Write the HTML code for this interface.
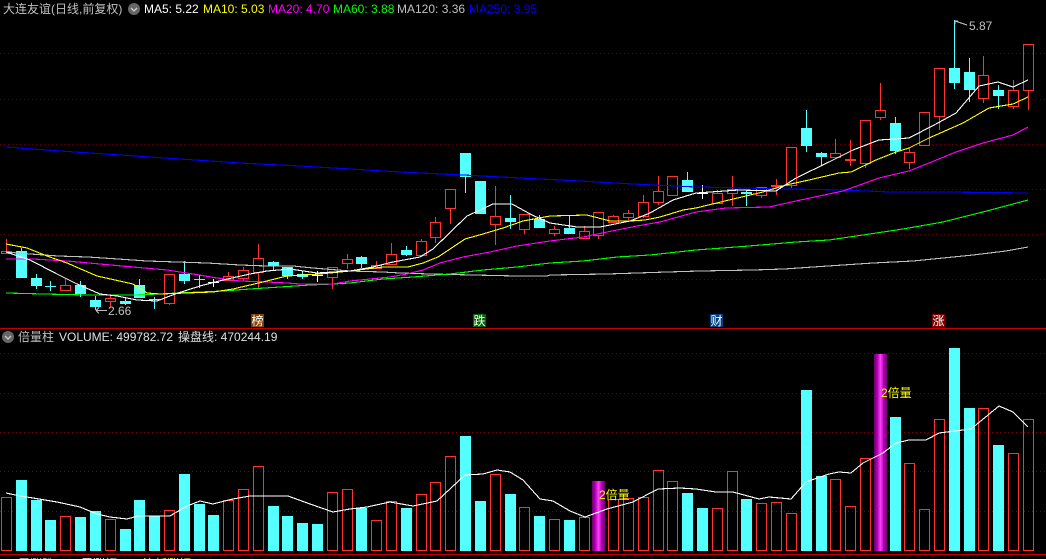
<!DOCTYPE html>
<html><head><meta charset="utf-8">
<style>
html,body{margin:0;padding:0;background:#000;width:1046px;height:559px;overflow:hidden}
#a{position:relative;width:1046px;height:559px;overflow:hidden;background:#000}
svg{position:absolute;left:0;top:0}
.t{position:absolute;white-space:nowrap;font:12px/14px "Liberation Sans","WenQuanYi Zen Hei","Noto Sans CJK SC",sans-serif}
.b{position:absolute;width:13px;height:13px;color:#fff;text-align:center;font:12px/13px "WenQuanYi Zen Hei","Noto Sans CJK SC",sans-serif;overflow:hidden}
</style></head><body><div id="a">
<svg width="1046" height="559" viewBox="0 0 1046 559" shape-rendering="crispEdges" fill="none">
<defs><linearGradient id="g" x1="0" x2="1" y1="0" y2="0"><stop offset="0" stop-color="#6a006a"/><stop offset=".25" stop-color="#b000b0"/><stop offset=".5" stop-color="#ff40ff"/><stop offset=".75" stop-color="#b000b0"/><stop offset="1" stop-color="#6a006a"/></linearGradient>
<pattern id="d1" width="4" height="1" patternUnits="userSpaceOnUse"><rect width="1" height="1" fill="#600000"/></pattern>
<pattern id="d2" width="4" height="1" patternUnits="userSpaceOnUse"><rect width="1" height="1" fill="#800000"/></pattern></defs>
<g fill="url(#d1)"><rect y="53" width="1046" height="1"/><rect y="99" width="1046" height="1"/><rect y="144" width="1046" height="1"/><rect y="189" width="1046" height="1"/><rect y="234" width="1046" height="1"/><rect y="279" width="1046" height="1"/></g>
<g fill="url(#d2)"><rect y="353" width="1046" height="1"/><rect y="393" width="1046" height="1"/><rect y="432" width="1046" height="1"/><rect y="471" width="1046" height="1"/><rect y="511" width="1046" height="1"/></g>
<path stroke="#c00000" d="M0 328.500H1046M0 554.500H1046"/>

<path fill="#54ffff" d="M16 251h11v27h-11zM21 248h1v3h-1zM31 278h11v8h-11zM36 274h1v15h-1zM45 286h11v1h-11zM50 281h1v10h-1zM75 285h11v9h-11zM80 281h1v16h-1zM90 300h11v7h-11zM95 296h1v14h-1zM120 301h11v3h-11zM125 297h1v8h-1zM134 285h11v13h-11zM139 279h1v6h-1zM149 299h11v1h-11zM154 297h1v12h-1zM179 274h11v7h-11zM184 261h1v23h-1zM194 279h11v1h-11zM199 275h1v13h-1zM268 262h11v4h-11zM273 261h1v9h-1zM282 267h11v9h-11zM287 276h1v3h-1zM297 274h11v3h-11zM302 271h1v8h-1zM356 257h11v7h-11zM361 256h1v12h-1zM401 250h11v5h-11zM406 246h1v10h-1zM460 153h11v24h-11zM465 177h1v16h-1zM475 181h11v33h-11zM505 218h11v4h-11zM510 195h1v34h-1zM534 219h11v9h-11zM539 215h1v4h-1zM564 228h11v6h-11zM569 215h1v13h-1zM682 180h11v12h-11zM687 172h1v8h-1zM741 192h11v2h-11zM746 190h1v16h-1zM801 128h11v18h-11zM806 110h1v42h-1zM816 153h11v4h-11zM821 152h1v13h-1zM890 123h11v28h-11zM895 117h1v37h-1zM949 68h11v15h-11zM954 20h1v69h-1zM964 72h11v18h-11zM969 58h1v44h-1zM993 90h11v6h-11zM998 85h1v24h-1z"/>
<path stroke="#ff3232" d="M1.500 251.500h10v2h-10zM6.500 239V251M60.500 285.500h10v5h-10zM65.500 279V285M105.500 298.500h10v3h-10zM110.500 296V298M110.500 302V307M164.500 274.500h10v29h-10zM169.500 304V305M223.500 276.500h10v4h-10zM228.500 272V276M238.500 270.500h10v8h-10zM243.500 267V270M243.500 279V281M253.500 258.500h10v14h-10zM258.500 244V258M258.500 273V288M327.500 267.500h10v10h-10zM332.500 278V289M342.500 259.500h10v4h-10zM347.500 254V259M347.500 264V269M371.500 265.500h10v3h-10zM376.500 261V265M386.500 254.500h10v10h-10zM391.500 243V254M416.500 241.500h10v14h-10zM421.500 239V241M430.500 222.500h10v15h-10zM435.500 217V222M435.500 238V243M445.500 189.500h10v19h-10zM450.500 209V224M490.500 216.500h10v8h-10zM495.500 186V216M495.500 225V245M519.500 214.500h10v15h-10zM524.500 230V234M549.500 229.500h10v4h-10zM554.500 226V229M554.500 234V236M579.500 231.500h10v7h-10zM584.500 226V231M593.500 212.500h10v23h-10zM598.500 236V239M608.500 216.500h10v6h-10zM613.500 215V216M623.500 213.500h10v4h-10zM628.500 210V213M628.500 218V220M638.500 202.500h10v14h-10zM643.500 195V202M643.500 217V218M653.500 191.500h10v11h-10zM658.500 176V191M658.500 203V205M667.500 176.500h10v19h-10zM712.500 193.500h10v10h-10zM717.500 190V193M727.500 189.500h10v4h-10zM732.500 176V189M732.500 194V206M756.500 187.500h10v8h-10zM761.500 196V198M771 185.500h11M771 186.500h11M776.500 179V195M786.500 147.500h10v38h-10zM791.500 186V188M830.500 153.500h10v4h-10zM835.500 139V153M845 159.500h11M845 160.500h11M850.500 140V166M860.500 120.500h10v43h-10zM865.500 164V168M875.500 110.500h10v7h-10zM880.500 83V110M880.500 118V120M904.500 152.500h10v10h-10zM909.500 148V152M909.500 163V169M919.500 112.500h10v33h-10zM934.500 68.500h10v48h-10zM939.500 117V130M978.500 75.500h10v23h-10zM983.500 56V75M983.500 99V103M1008.500 90.500h10v16h-10zM1013.500 80V90M1013.500 107V109M1023.500 44.500h10v46h-10zM1028.500 91V110"/>
<path stroke="#fff" d="M208 282.500h11M213.500 279V287M312 275.500h11M317.500 271V282M697 193.500h11M702.500 185V199"/>

<g stroke-width="1.100">
<polyline stroke="#0000ff" points="6,147 60,151 120,155 180,159 240,163 300,166 350,169 400,172 463,175 520,178 580,181 633,184 696,187 790,189 840,190 890,192 946,192 1028,193"/>
<polyline stroke="#c0c0c0" points="6,252 30,254 58,256 88,257 118,259 147,261 177,262 207,263 240,265 267,266 293,266 313,268 350,271 383,272 400,273 430,274 473,275 517,276 547,276 550,275 607,274 637,273 667,272 700,271 753,270 784,269 813,267 843,265 873,263 913,261 943,258 973,255 1006,251 1028,247"/>
<polyline stroke="#00ff00" points="6,293 43,294 87,295 133,295 160,294 177,293 223,291 250,289 280,287 310,285 333,284 350,283 383,279 413,277 450,274 483,270 517,267 550,263 583,261 617,257 650,255 696,250 749,246 796,242 829,240 863,235 903,229 943,222 983,212 1028,200"/>
<polyline stroke="#ff00ff" points="6,259 33,259 67,261 100,264 133,267 167,270 193,274 217,278 240,281 267,282 287,283 300,284 333,284 350,281 370,279 390,277 407,274 423,270 440,263 463,257 490,252 517,246 550,241 583,237 607,232 637,226 660,222 696,212 726,208 769,207 796,201 843,191 879,178 909,171 929,163 956,152 983,143 1013,135 1028,127"/>
<polyline stroke="#ffff00" points="6,244 27,248 47,256 67,263 97,276 133,284 147,293 160,294 213,292 233,289 267,281 287,276 320,274 350,271 383,267 408,267 423,263 438,257 465,239 483,234 503,228 523,221 550,216 587,215 610,221 630,221 645,220 660,217 683,210 696,208 729,200 763,192 786,185 809,180 839,173 851,172 876,160 896,152 909,148 929,138 963,123 989,108 1013,104 1028,97"/>
<polyline stroke="#fff" points="6,252 30,260 57,274 77,284 100,294 117,296 137,300 157,301 175,294 200,286 223,280 250,274 267,271 290,269 317,273 350,271 373,267 393,262 420,257 433,249 467,216 493,204 512,204 532,215 550,223 577,227 600,227 630,221 650,213 673,200 696,193 739,190 776,191 796,178 829,162 853,150 879,140 909,138 936,124 956,113 979,86 998,82 1013,87 1028,80"/>
</g>

<path stroke="#c0c0c0" d="M955 21L967 25M955 21h3M955 21v3M96 310.500H107M96 310.500l3-3M96 310.500l3 3"/>

<path fill="#54ffff" d="M16 480h11V551h-11zM31 500h11V551h-11zM45 520h11V551h-11zM75 517h11V551h-11zM90 511h11V551h-11zM120 529h11V551h-11zM134 500h11V551h-11zM149 516h11V551h-11zM179 474h11V551h-11zM194 504h11V551h-11zM208 515h11V551h-11zM268 506h11V551h-11zM282 516h11V551h-11zM297 523h11V551h-11zM312 524h11V551h-11zM356 508h11V551h-11zM401 508h11V551h-11zM460 436h11V551h-11zM475 501h11V551h-11zM505 494h11V551h-11zM534 516h11V551h-11zM564 520h11V551h-11zM682 493h11V551h-11zM697 508h11V551h-11zM741 499h11V551h-11zM801 390h11V551h-11zM816 476h11V551h-11zM890 417h11V551h-11zM949 348h11V551h-11zM964 408h11V551h-11zM993 445h11V551h-11z"/>
<path stroke="#ff3232" d="M1.500 497.500h10V550.500h-10zM60.500 516.500h10V550.500h-10zM105.500 519.500h10V550.500h-10zM164.500 510.500h10V550.500h-10zM223.500 500.500h10V550.500h-10zM238.500 489.500h10V550.500h-10zM253.500 466.500h10V550.500h-10zM327.500 492.500h10V550.500h-10zM342.500 489.500h10V550.500h-10zM371.500 520.500h10V550.500h-10zM386.500 501.500h10V550.500h-10zM416.500 494.500h10V550.500h-10zM430.500 482.500h10V550.500h-10zM445.500 456.500h10V550.500h-10zM490.500 474.500h10V550.500h-10zM519.500 507.500h10V550.500h-10zM549.500 519.500h10V550.500h-10zM579.500 517.500h10V550.500h-10zM608.500 499.500h10V550.500h-10zM623.500 498.500h10V550.500h-10zM638.500 497.500h10V550.500h-10zM653.500 470.500h10V550.500h-10zM667.500 481.500h10V550.500h-10zM712.500 508.500h10V550.500h-10zM727.500 471.500h10V550.500h-10zM756.500 503.500h10V550.500h-10zM771.500 502.500h10V550.500h-10zM786.500 513.500h10V550.500h-10zM830.500 479.500h10V550.500h-10zM845.500 506.500h10V550.500h-10zM860.500 458.500h10V550.500h-10zM904.500 463.500h10V550.500h-10zM919.500 509.500h10V550.500h-10zM934.500 419.500h10V550.500h-10zM978.500 408.500h10V550.500h-10zM1008.500 453.500h10V550.500h-10zM1023.500 419.500h10V550.500h-10z"/>
<rect x="592" y="481" width="13" height="70" fill="url(#g)"/>
<rect x="874" y="354" width="13" height="197" fill="url(#g)"/>
<polyline stroke="#fff" stroke-width="1.100" points="6,493 20,496 33,498 57,502 80,507 97,514 110,517 127,519 138,516 170,516 187,506 200,501 213,504 233,499 250,496 288,496 310,504 333,512 350,509 367,507 390,502 413,506 437,501 465,475 483,474 497,470 510,472 523,480 540,499 553,501 570,511 585,517 607,509 633,502 658,489 680,488 696,489 716,492 733,492 759,499 769,497 791,499 806,482 829,474 839,472 851,473 863,463 883,453 896,443 909,440 926,440 939,433 963,430 971,429 999,406 1013,412 1028,427"/>

<circle cx="134" cy="9" r="6" fill="#666" shape-rendering="auto"/>
<path d="M131 8l3 3 3-3" stroke="#ccc" stroke-width="1.300" shape-rendering="auto"/>
<circle cx="8" cy="337" r="6" fill="#666" shape-rendering="auto"/>
<path d="M5 336l3 3 3-3" stroke="#ccc" stroke-width="1.300" shape-rendering="auto"/>
</svg>

<div class="t" style="left:3px;top:2px;color:#c0c0c0">大连友谊(日线,前复权)</div>
<div class="t" style="left:144px;top:2px;color:#fff">MA5: 5.22</div>
<div class="t" style="left:203px;top:2px;color:#ff0">MA10: 5.03</div>
<div class="t" style="left:268px;top:2px;color:#f0f">MA20: 4.70</div>
<div class="t" style="left:333px;top:2px;color:#0f0">MA60: 3.88</div>
<div class="t" style="left:397px;top:2px;color:#c0c0c0">MA120: 3.36</div>
<div class="t" style="left:469px;top:2px;color:#00f">MA250: 3.95</div>
<div class="t" style="left:969px;top:19px;color:#c0c0c0">5.87</div>
<div class="t" style="left:108px;top:304px;color:#c0c0c0">2.66</div>
<div class="t" style="left:18px;top:330px;color:#c0c0c0">倍量柱</div>
<div class="t" style="left:59px;top:330px;color:#e0e0e0">VOLUME: 499782.72</div>
<div class="t" style="left:178px;top:330px;color:#e0e0e0">操盘线: 470244.19</div>
<div class="t" style="left:599px;top:488px;color:#ff0">2倍量</div>
<div class="t" style="left:881px;top:386px;color:#ff0">2倍量</div>
<div class="b" style="left:251px;top:314px;background:#804000">榜</div>
<div class="b" style="left:473px;top:314px;background:#006400">跌</div>
<div class="b" style="left:710px;top:314px;background:#004080">财</div>
<div class="b" style="left:932px;top:314px;background:#800000">涨</div>
<div class="t" style="left:18px;top:557px;color:#c0c0c0">累涨跌 8.6%</div>
<div class="t" style="left:81px;top:557px;color:#fff">累涨幅 1.96</div>
<div class="t" style="left:143px;top:557px;color:#ff0">连板涨幅 1.16</div>
</div></body></html>
